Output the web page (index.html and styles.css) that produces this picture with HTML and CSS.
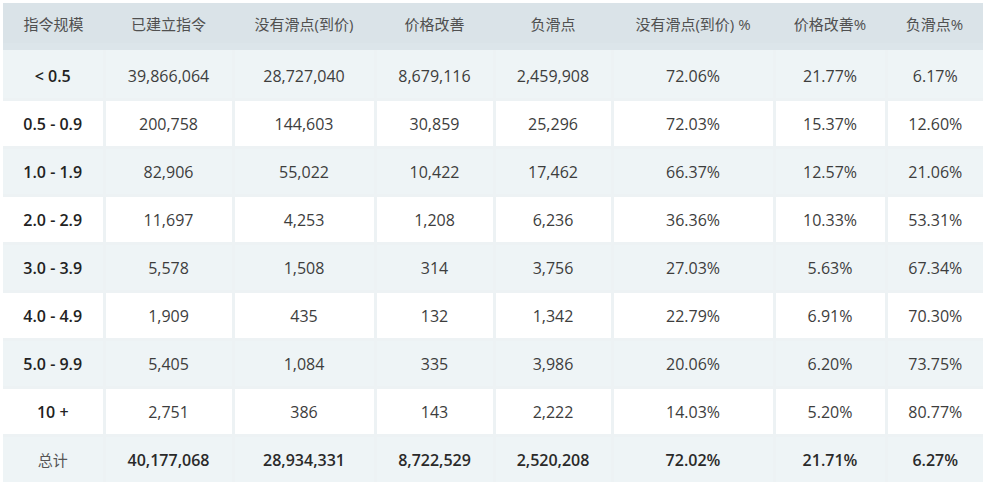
FILE: index.html
```html
<!DOCTYPE html>
<html lang="zh">
<head>
<meta charset="utf-8">
<title>滑点统计</title>
<link rel="stylesheet" href="styles.css">
</head>
<body>
<div class="wrap">
<table class="stats">
<colgroup>
<col class="c1"><col class="c2"><col class="c3"><col class="c4"><col class="c5"><col class="c6"><col class="c7"><col class="c8">
</colgroup>
<thead>
<tr><th>指令规模</th><th>已建立指令</th><th>没有滑点(到价)</th><th>价格改善</th><th>负滑点</th><th>没有滑点(到价) %</th><th>价格改善%</th><th>负滑点%</th></tr>
</thead>
<tbody>
<tr class="alt"><td class="lbl">&lt; 0.5</td><td>39,866,064</td><td>28,727,040</td><td>8,679,116</td><td>2,459,908</td><td>72.06%</td><td>21.77%</td><td>6.17%</td></tr>
<tr><td class="lbl">0.5 - 0.9</td><td>200,758</td><td>144,603</td><td>30,859</td><td>25,296</td><td>72.03%</td><td>15.37%</td><td>12.60%</td></tr>
<tr class="alt"><td class="lbl">1.0 - 1.9</td><td>82,906</td><td>55,022</td><td>10,422</td><td>17,462</td><td>66.37%</td><td>12.57%</td><td>21.06%</td></tr>
<tr><td class="lbl">2.0 - 2.9</td><td>11,697</td><td>4,253</td><td>1,208</td><td>6,236</td><td>36.36%</td><td>10.33%</td><td>53.31%</td></tr>
<tr class="alt"><td class="lbl">3.0 - 3.9</td><td>5,578</td><td>1,508</td><td>314</td><td>3,756</td><td>27.03%</td><td>5.63%</td><td>67.34%</td></tr>
<tr><td class="lbl">4.0 - 4.9</td><td>1,909</td><td>435</td><td>132</td><td>1,342</td><td>22.79%</td><td>6.91%</td><td>70.30%</td></tr>
<tr class="alt"><td class="lbl">5.0 - 9.9</td><td>5,405</td><td>1,084</td><td>335</td><td>3,986</td><td>20.06%</td><td>6.20%</td><td>73.75%</td></tr>
<tr><td class="lbl">10 +</td><td>2,751</td><td>386</td><td>143</td><td>2,222</td><td>14.03%</td><td>5.20%</td><td>80.77%</td></tr>
<tr class="alt total"><td class="sum">总计</td><td>40,177,068</td><td>28,934,331</td><td>8,722,529</td><td>2,520,208</td><td>72.02%</td><td>21.71%</td><td>6.27%</td></tr>
</tbody>
</table>
</div>
</body>
</html>
```

FILE: styles.css
```css
html, body {
  margin: 0;
  padding: 0;
  background: #ffffff;
}

.wrap {
  padding: 3px 0 0 3px;
}

.stats {
  border-collapse: collapse;
  width: 980px;
  table-layout: fixed;
  font-family: "Open Sans", "Noto Sans CJK SC", sans-serif;
  color: #3d3d3d;
}

.c1 { width: 101px; }
.c2 { width: 129px; }
.c3 { width: 142px; }
.c4 { width: 119px; }
.c5 { width: 118px; }
.c6 { width: 162px; }
.c7 { width: 112px; }
.c8 { width: 97px; }

.stats th {
  height: 40px;
  padding: 0;
  background: #dae3e8;
  border-bottom: 2px solid #c3cfd6;
  font-size: 15px;
  font-weight: 400;
  color: #505050;
  text-align: center;
  white-space: nowrap;
}

.stats td {
  height: 45px;
  padding: 0;
  text-align: center;
  font-size: 16px;
  font-weight: 400;
  background: #ffffff;
  border-top: 3px solid #edf2f4;
}

.stats td + td {
  border-left: 3px solid #edf2f4;
}

.stats tbody tr:first-child td {
  border-top: 7px solid #dce5ea;
  height: 44px;
  padding-top: 4px;
}

.stats tr.alt td {
  background: #eef4f6;
}

.stats td.lbl {
  font-weight: 600;
  color: #222;
}

.stats tr.total td {
  font-weight: 600;
  color: #2a2a2a;
}

.stats tr.total td.sum {
  font-weight: 400;
  font-size: 15px;
  color: #555;
}
```
